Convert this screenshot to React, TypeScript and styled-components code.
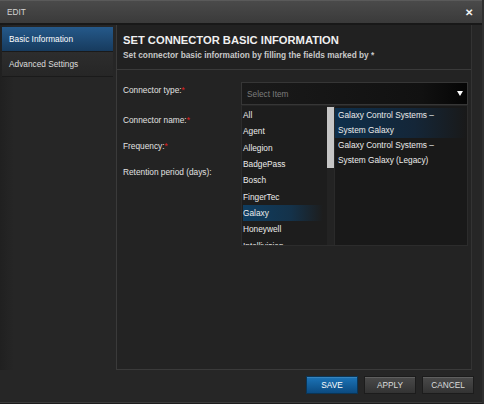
import styled, { createGlobalStyle } from "styled-components";

const GlobalStyle = createGlobalStyle`
  html, body {
    margin: 0;
    padding: 0;
    background: #262626;
  }
  * {
    box-sizing: border-box;
  }
`;

const brands = [
  "All",
  "Agent",
  "Allegion",
  "BadgePass",
  "Bosch",
  "FingerTec",
  "Galaxy",
  "Honeywell",
  "Intellivision",
];

const models = [
  "Galaxy Control Systems – System Galaxy",
  "Galaxy Control Systems – System Galaxy (Legacy)",
];

export default function App() {
  return (
    <>
      <GlobalStyle />
      <Dialog>
        <TitleBar>
          <span className="title">EDIT</span>
          <span className="close">✕</span>
        </TitleBar>
        <Body>
          <Nav>
            <NavItem $active>Basic Information</NavItem>
            <NavItem>Advanced Settings</NavItem>
          </Nav>
          <Panel>
            <PanelHeader>
              <h1>SET CONNECTOR BASIC INFORMATION</h1>
              <p>Set connector basic information by filling the fields marked by *</p>
            </PanelHeader>
            <Form>
              <Row $tall>
                <Label>
                  Connector type:<Req>*</Req>
                </Label>
                <SelectWrap>
                  <SelectBox>
                    <span>Select Item</span>
                    <Arrow />
                  </SelectBox>
                  <Dropdown>
                    <BrandList>
                      {brands.map((b) => (
                        <BrandItem key={b} $selected={b === "Galaxy"}>
                          {b}
                        </BrandItem>
                      ))}
                    </BrandList>
                    <ScrollTrack>
                      <ScrollThumb />
                    </ScrollTrack>
                    <ModelList>
                      {models.map((m, i) => (
                        <ModelItem key={m} $selected={i === 0}>
                          {m}
                        </ModelItem>
                      ))}
                    </ModelList>
                  </Dropdown>
                </SelectWrap>
              </Row>
              <Row>
                <Label>
                  Connector name:<Req>*</Req>
                </Label>
              </Row>
              <Row>
                <Label>
                  Frequency:<Req>*</Req>
                </Label>
              </Row>
              <Row>
                <Label>Retention period (days):</Label>
              </Row>
            </Form>
          </Panel>
        </Body>
        <Footer>
          <Button $primary>SAVE</Button>
          <Button>APPLY</Button>
          <Button>CANCEL</Button>
        </Footer>
      </Dialog>
    </>
  );
}

const Dialog = styled.div`
  width: 484px;
  height: 404px;
  display: flex;
  flex-direction: column;
  background: #262626;
  border-right: 2px solid #2f2f2f;
  border-bottom: 1px solid #1c1c1c;
  font-family: "Liberation Sans", Arial, sans-serif;
  color: #e0e0e0;
  overflow: hidden;
`;

const TitleBar = styled.div`
  height: 25px;
  flex: none;
  display: flex;
  align-items: center;
  justify-content: space-between;
  padding: 0 9px 0 7px;
  background: linear-gradient(to bottom, #4a4a4a, #3a3a3a);
  border-top: 1px solid #5a5a5a;
  border-bottom: 2px solid #181818;
  .title {
    font-size: 8.3px;
    color: #d4d4d4;
  }
  .close {
    font-size: 10px;
    font-weight: bold;
    color: #f2f2f2;
  }
`;

const Body = styled.div`
  flex: none;
  height: 345px;
  display: flex;
  padding-right: 10px;
`;

const Nav = styled.div`
  width: 116px;
  flex: none;
  padding: 2px 3px 0 2px;
  display: flex;
  flex-direction: column;
  background: linear-gradient(to right, #202020, #262626 14px);
`;

const NavItem = styled.div<{ $active?: boolean }>`
  height: 25px;
  display: flex;
  align-items: center;
  padding-left: 7px;
  font-size: 8.3px;
  color: ${(p) => (p.$active ? "#ffffff" : "#dddddd")};
  background: ${(p) =>
    p.$active
      ? "linear-gradient(to bottom, #25598a, #173b5e)"
      : "linear-gradient(to bottom, #2d2d2d, #262626)"};
  border-bottom: 1px solid #1a1a1a;
`;

const Panel = styled.div`
  flex: 1;
  display: flex;
  flex-direction: column;
  background: #232323;
  border-left: 1px solid #3a3a3a;
  border-right: 1px solid #333333;
  border-bottom: 1px solid #3a3a3a;
`;

const PanelHeader = styled.div`
  height: 45px;
  flex: none;
  padding: 8px 6px 0;
  background: #212121;
  border-bottom: 1px solid #3a3a3a;
  h1 {
    margin: 0;
    font-size: 11.2px;
    line-height: 14px;
    font-weight: bold;
    color: #f0f0f0;
  }
  p {
    margin: 2px 0 0;
    font-size: 8.3px;
    line-height: 12px;
    font-weight: bold;
    color: #c8c8c8;
  }
`;

const Form = styled.div`
  display: flex;
  flex-direction: column;
  gap: 8px;
  padding: 12px 3px 0 6px;
`;

const Row = styled.div<{ $tall?: boolean }>`
  display: flex;
  height: ${(p) => (p.$tall ? "22px" : "18px")};
`;

const Label = styled.div`
  width: 118px;
  flex: none;
  font-size: 8.3px;
  line-height: 16px;
  color: #e2e2e2;
`;

const Req = styled.span`
  color: #e02020;
`;

const SelectWrap = styled.div`
  position: relative;
  flex: 1;
`;

const SelectBox = styled.div`
  height: 23px;
  display: flex;
  align-items: center;
  justify-content: space-between;
  padding: 0 4px 0 5px;
  border: 1px solid #363636;
  background: linear-gradient(to right, #1a1a1a, #111111 80%, #050505);
  font-size: 8.3px;
  color: #7c7c7c;
`;

const Arrow = styled.span`
  width: 0;
  height: 0;
  border-left: 3.5px solid transparent;
  border-right: 3.5px solid transparent;
  border-top: 5px solid #ffffff;
`;

const Dropdown = styled.div`
  position: absolute;
  top: 23px;
  left: 0;
  right: 0;
  height: 141px;
  display: flex;
  background: #1d1d1d;
  border: 1px solid #2c2c2c;
  border-top: 1px solid #262626;
  overflow: hidden;
  z-index: 2;
`;

const BrandList = styled.div`
  width: 85px;
  flex: none;
  padding: 1px 4px 0 1px;
  overflow: hidden;
`;

const BrandItem = styled.div<{ $selected?: boolean }>`
  height: 16.35px;
  line-height: 16.35px;
  font-size: 8.3px;
  white-space: nowrap;
  color: #ececec;
  background: ${(p) =>
    p.$selected
      ? "linear-gradient(to right, #0f3d60, #14324a 60%, #1d1d1d)"
      : "transparent"};
`;

const ScrollTrack = styled.div`
  width: 7px;
  flex: none;
  background: #232323;
  padding-top: 1px;
`;

const ScrollThumb = styled.div`
  height: 61px;
  background: #c6c6c6;
`;

const ModelList = styled.div`
  flex: 1;
  background: #191919;
  border-left: 1px solid #2a2a2a;
  padding-top: 2px;
`;

const ModelItem = styled.div<{ $selected?: boolean }>`
  padding: 0 8px 0 3px;
  font-size: 8.3px;
  line-height: 15px;
  color: #ececec;
  background: ${(p) =>
    p.$selected
      ? "linear-gradient(to right, #0e2f4b, #142638 60%, #191919)"
      : "transparent"};
`;

const Footer = styled.div`
  flex: 1;
  display: flex;
  justify-content: flex-end;
  align-items: flex-start;
  gap: 6px;
  padding: 6px 8px 0 0;
  border-bottom: 1px solid #3a3a3a;
`;

const Button = styled.button<{ $primary?: boolean }>`
  width: 52px;
  height: 18px;
  padding: 0;
  font-family: "Liberation Sans", Arial, sans-serif;
  font-size: 8.3px;
  color: ${(p) => (p.$primary ? "#ffffff" : "#dcdcdc")};
  border: 1px solid ${(p) => (p.$primary ? "#0a3556" : "#1c1c1c")};
  background: ${(p) =>
    p.$primary
      ? "linear-gradient(to bottom, #1c74b8, #0b4a80)"
      : "linear-gradient(to bottom, #4a4a4a, #333333)"};
  box-shadow: inset 0 1px 0 rgba(255, 255, 255, 0.12);
`;
